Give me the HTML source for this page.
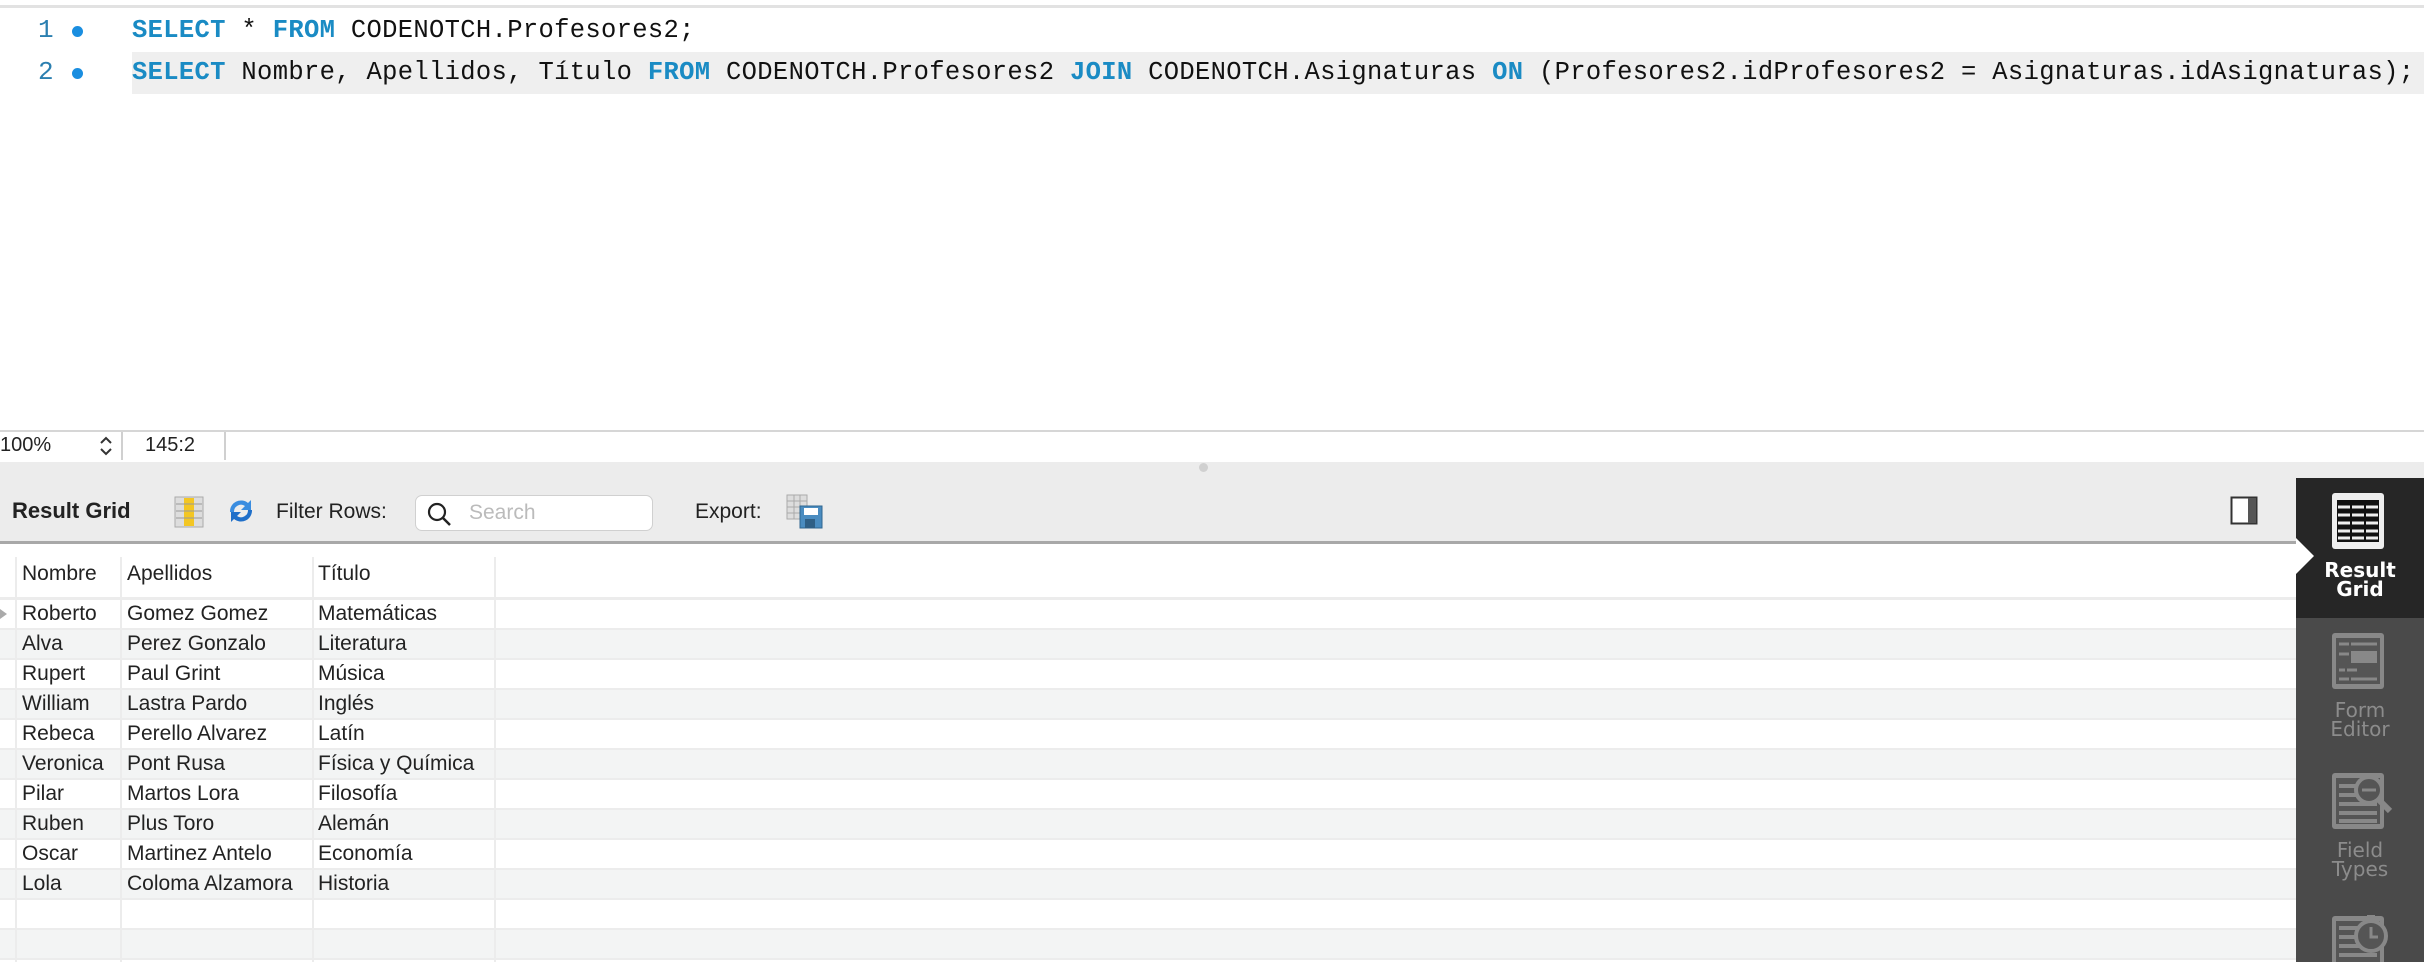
<!DOCTYPE html>
<html><head><meta charset="utf-8"><style>
*{margin:0;padding:0;box-sizing:border-box}
body{width:2424px;height:962px;overflow:hidden;background:#fff;position:relative;font-family:"Liberation Sans",Arial,sans-serif}
.abs{position:absolute}
.code{font-family:"Liberation Mono","DejaVu Sans Mono",monospace;font-size:25.5px;white-space:pre;color:#111;letter-spacing:0.33px}
.kw{color:#1a8bc4;font-weight:bold}
.ln{font-family:"Liberation Mono",monospace;font-size:26px;color:#2b7fb0}
.dot{width:11px;height:11px;border-radius:50%;background:#1a8ee0}
.cell{position:absolute;font-size:21px;color:#222;line-height:30px}
.row{position:absolute;left:0;width:2296px;height:30px;border-bottom:2px solid #ececec}
.vl{position:absolute;top:557px;width:2px;background:#ececec}
.sb{color:#8c8c8c;font-size:20px;text-align:center;position:absolute;left:2296px;width:128px;line-height:19px;font-family:"DejaVu Sans",sans-serif}
</style></head><body>
<div class="abs" style="left:0;top:0;width:2424px;height:8px;background:#fff;border-bottom:3px solid #e2e2e2"></div>
<div class="abs" style="left:132px;top:52px;width:2292px;height:42px;background:#efefef"></div>
<div class="abs ln" style="left:38px;top:15px">1</div>
<div class="abs dot" style="left:72px;top:26px"></div>
<div class="abs ln" style="left:38px;top:57px">2</div>
<div class="abs dot" style="left:72px;top:68px"></div>
<div class="abs code" style="left:132px;top:16px"><span class="kw">SELECT</span> * <span class="kw">FROM</span> CODENOTCH.Profesores2;</div>
<div class="abs code" style="left:132px;top:58px"><span class="kw">SELECT</span> Nombre, Apellidos, Título <span class="kw">FROM</span> CODENOTCH.Profesores2 <span class="kw">JOIN</span> CODENOTCH.Asignaturas <span class="kw">ON</span> (Profesores2.idProfesores2 = Asignaturas.idAsignaturas);</div>

<!-- status bar -->
<div class="abs" style="left:0;top:430px;width:2424px;height:32px;background:#fff;border-top:2px solid #d6d6d6"></div>
<div class="abs" style="left:0;top:434px;font-size:20px;color:#222">100%</div>
<svg class="abs" style="left:98px;top:434px" width="16" height="24"><path d="M3 9l5-5 5 5M3 15l5 5 5-5" stroke="#333" stroke-width="2" fill="none"/></svg>
<div class="abs" style="left:121px;top:432px;width:2px;height:28px;background:#d0d0d0"></div>
<div class="abs" style="left:145px;top:434px;font-size:20px;color:#222">145:2</div>
<div class="abs" style="left:224px;top:432px;width:2px;height:28px;background:#d0d0d0"></div>

<!-- toolbar -->
<div class="abs" style="left:0;top:462px;width:2296px;height:82px;background:#ececec;border-bottom:3px solid #a8a8a8"></div>
<div class="abs" style="left:2296px;top:462px;width:128px;height:16px;background:#ececec"></div>
<div class="abs" style="left:1199px;top:463px;width:9px;height:9px;border-radius:50%;background:#d0d0d0"></div>
<div class="abs" style="left:12px;top:498px;font-size:22px;font-weight:bold;color:#222">Result Grid</div>
<svg class="abs" style="left:174px;top:496px" width="30" height="32"><rect x="1" y="1" width="28" height="30" fill="#ddd" stroke="#aaa"/><rect x="10" y="2" width="10" height="28" fill="#f3c623"/><path d="M2 8h26M2 15h26M2 22h26" stroke="#999"/></svg>
<svg class="abs" style="left:224px;top:496px" width="34" height="30"><path d="M6 16a11 11 0 0 1 18-9l3-3v10h-10l4-4a7 7 0 0 0-11 6z" fill="#3a8de0"/><path d="M28 14a11 11 0 0 1-18 9l-3 3v-10h10l-4 4a7 7 0 0 0 11-6z" fill="#1f6fc9"/></svg>
<div class="abs" style="left:276px;top:500px;font-size:21px;color:#222">Filter Rows:</div>
<div class="abs" style="left:415px;top:495px;width:238px;height:36px;background:#fff;border:1px solid #d0d0d0;border-radius:7px"></div>
<svg class="abs" style="left:426px;top:501px" width="26" height="26"><circle cx="11" cy="11" r="8" fill="none" stroke="#222" stroke-width="2.2"/><path d="M17 17l7 7" stroke="#222" stroke-width="2.5"/></svg>
<div class="abs" style="left:469px;top:501px;font-size:21px;color:#bbb">Search</div>
<div class="abs" style="left:695px;top:500px;font-size:21px;color:#222">Export:</div>
<svg class="abs" style="left:786px;top:494px" width="38" height="36"><rect x="1" y="1" width="20" height="24" fill="#ddd" stroke="#aaa"/><path d="M1 7h20M1 13h20M1 19h20M8 1v24M14 1v24" stroke="#aaa"/><rect x="14" y="12" width="22" height="22" fill="#4a8cc0" stroke="#2f6690"/><rect x="18" y="14" width="14" height="7" fill="#fff"/><rect x="19" y="25" width="10" height="9" fill="#2f5f85"/></svg>
<svg class="abs" style="left:2230px;top:496px" width="30" height="30"><rect x="1.5" y="1.5" width="25" height="26" fill="#fff" stroke="#333" stroke-width="2"/><rect x="18" y="2" width="8" height="25" fill="#555"/></svg>

<!-- grid -->
<div class="abs" style="left:0;top:545px;width:2296px;height:55px;background:#fff;border-bottom:3px solid #ececec"></div>
<div class="cell" style="left:22px;top:559px">Nombre</div>
<div class="cell" style="left:127px;top:559px">Apellidos</div>
<div class="cell" style="left:318px;top:559px">Título</div>
<div class="row" style="top:600px;background:#fff"></div>
<div class="row" style="top:630px;background:#f3f4f4"></div>
<div class="row" style="top:660px;background:#fff"></div>
<div class="row" style="top:690px;background:#f3f4f4"></div>
<div class="row" style="top:720px;background:#fff"></div>
<div class="row" style="top:750px;background:#f3f4f4"></div>
<div class="row" style="top:780px;background:#fff"></div>
<div class="row" style="top:810px;background:#f3f4f4"></div>
<div class="row" style="top:840px;background:#fff"></div>
<div class="row" style="top:870px;background:#f3f4f4"></div>
<div class="row" style="top:900px;background:#fff"></div>
<div class="row" style="top:930px;background:#f3f4f4"></div>
<div class="vl" style="left:15px;height:405px"></div>
<div class="vl" style="left:120px;height:405px"></div>
<div class="vl" style="left:312px;height:405px"></div>
<div class="vl" style="left:494px;height:405px"></div>
<div class="abs" style="left:0;top:609px;width:0;height:0;border-left:7px solid #aaa;border-top:5px solid transparent;border-bottom:5px solid transparent"></div>
<div class="cell" style="left:22px;top:599px">Roberto<br>Alva<br>Rupert<br>William<br>Rebeca<br>Veronica<br>Pilar<br>Ruben<br>Oscar<br>Lola</div>
<div class="cell" style="left:127px;top:599px">Gomez Gomez<br>Perez Gonzalo<br>Paul Grint<br>Lastra Pardo<br>Perello Alvarez<br>Pont Rusa<br>Martos Lora<br>Plus Toro<br>Martinez Antelo<br>Coloma Alzamora</div>
<div class="cell" style="left:318px;top:599px">Matemáticas<br>Literatura<br>Música<br>Inglés<br>Latín<br>Física y Química<br>Filosofía<br>Alemán<br>Economía<br>Historia</div>

<!-- sidebar -->
<div class="abs" style="left:2296px;top:478px;width:128px;height:484px;background:#4a4a4a"></div>
<div class="abs" style="left:2296px;top:478px;width:128px;height:140px;background:#262626"></div>
<div class="abs" style="left:2296px;top:538px;width:0;height:0;border-left:18px solid #fff;border-top:18px solid transparent;border-bottom:18px solid transparent"></div>
<svg class="abs" style="left:2331px;top:492px" width="54" height="58"><rect x="1" y="1" width="52" height="56" rx="3" fill="#eee"/><rect x="6" y="8" width="42" height="42" fill="#111"/><path d="M7 15h40M7 23h40M7 31h40M7 39h40M7 46h40" stroke="#eee" stroke-width="3"/><path d="M20 8v42M34 8v42" stroke="#111" stroke-width="2"/></svg>
<div class="sb" style="top:561px;color:#fff;font-weight:bold">Result<br>Grid</div>
<svg class="abs" style="left:2331px;top:632px" width="54" height="58"><rect x="1" y="1" width="52" height="56" rx="3" fill="#888"/><rect x="5" y="6" width="44" height="46" fill="#555"/><path d="M8 12h10M20 12h26M8 22h10M8 38h6M16 38h10M8 47h10M20 47h26" stroke="#888" stroke-width="3"/><rect x="20" y="19" width="26" height="12" fill="#888"/></svg>
<div class="sb" style="top:701px">Form<br>Editor</div>
<svg class="abs" style="left:2331px;top:772px" width="64" height="58"><rect x="1" y="1" width="52" height="56" rx="3" fill="#888"/><rect x="5" y="6" width="44" height="46" fill="#555"/><path d="M8 14h38M8 23h38M8 32h38M8 41h38M8 49h38" stroke="#888" stroke-width="4"/><circle cx="38" cy="18" r="13" fill="#555" stroke="#888" stroke-width="4"/><path d="M31 18h14" stroke="#888" stroke-width="3"/><path d="M47 27l12 12" stroke="#888" stroke-width="6"/></svg>
<div class="sb" style="top:841px">Field<br>Types</div>
<svg class="abs" style="left:2331px;top:912px" width="60" height="50"><rect x="1" y="4" width="52" height="56" rx="3" fill="#888"/><rect x="5" y="9" width="44" height="46" fill="#555"/><path d="M8 16h38M8 25h38M8 34h38M8 43h38" stroke="#888" stroke-width="4"/><circle cx="40" cy="24" r="15" fill="#555" stroke="#888" stroke-width="4"/><path d="M40 15v10h7" stroke="#888" stroke-width="3" fill="none"/><rect x="36" y="3" width="8" height="5" fill="#888"/></svg>
</body></html>
